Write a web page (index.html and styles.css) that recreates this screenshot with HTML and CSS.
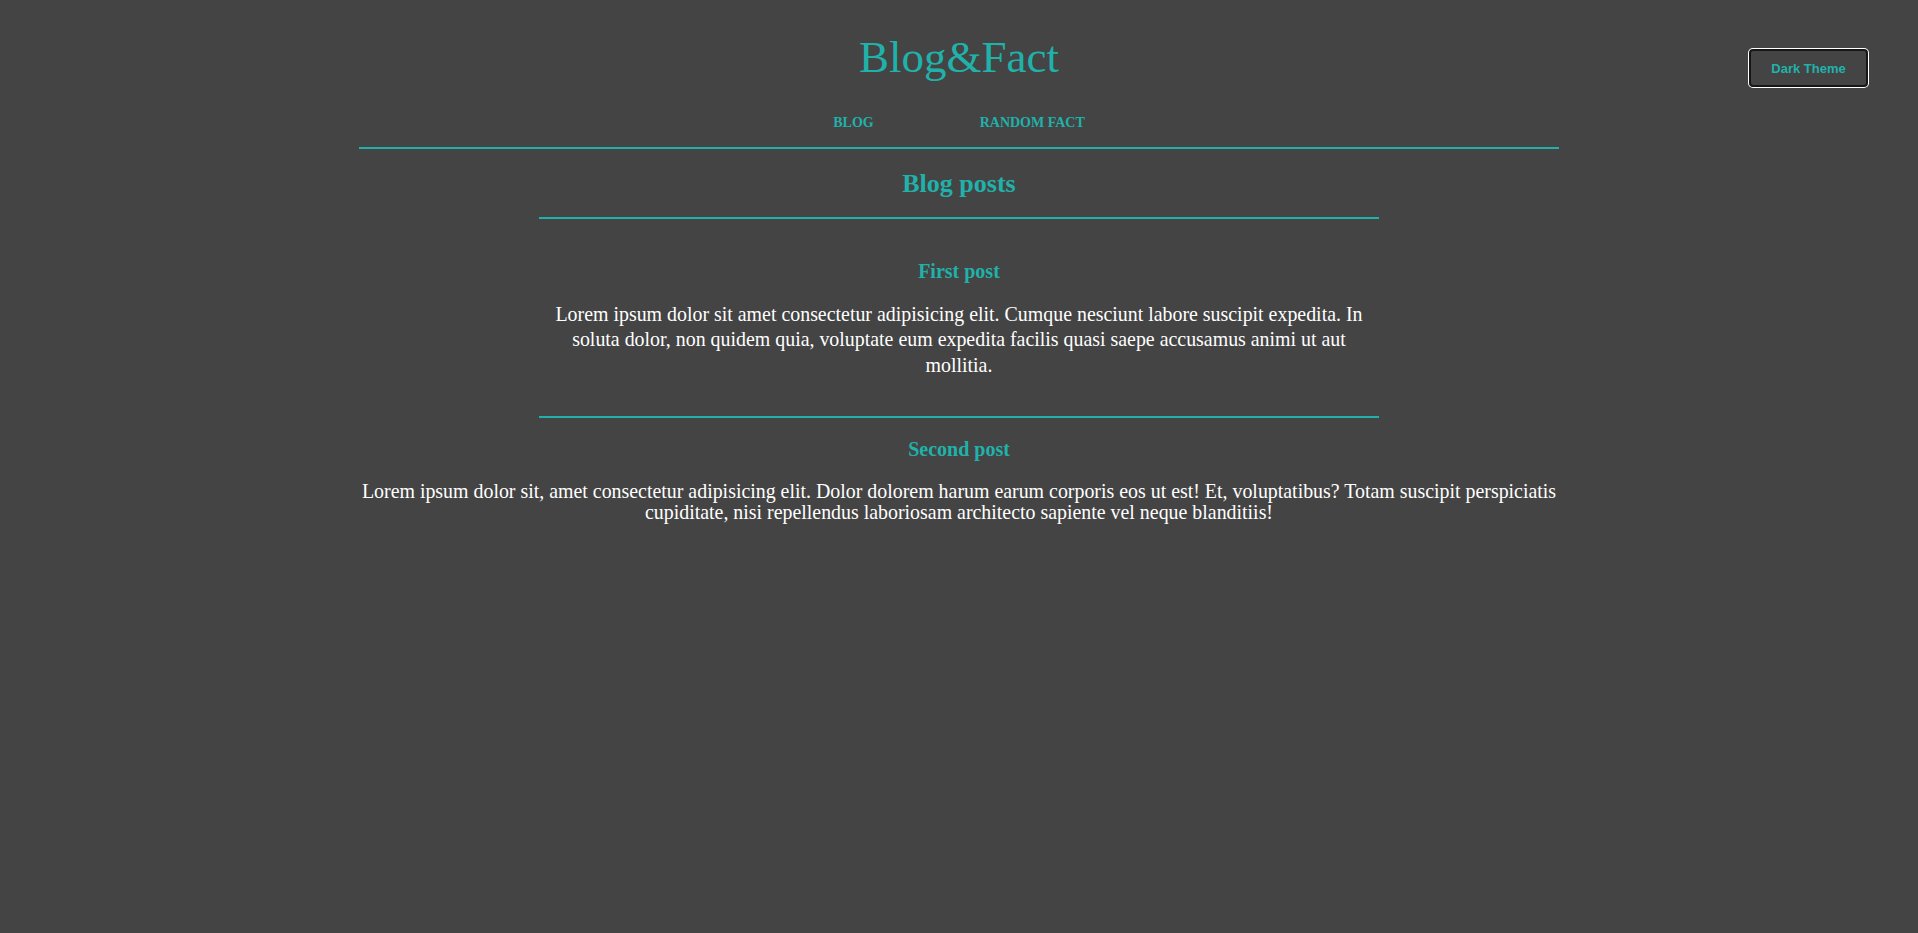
FILE: index.html
```html
<!DOCTYPE html>
<html lang="en">
<head>
<meta charset="utf-8">
<title>Blog&amp;Fact</title>
<link rel="stylesheet" href="styles.css">
</head>
<body>
<button class="theme-btn">Dark Theme</button>
<div class="page">
  <header class="site-header">
    <h1 class="logo">Blog&amp;Fact</h1>
    <nav class="nav">
      <a href="#" class="nav-link">BLOG</a>
      <a href="#" class="nav-link">RANDOM FACT</a>
    </nav>
  </header>
  <main class="content">
    <section class="posts">
      <h2 class="posts-title">Blog posts</h2>
      <article class="post post-first">
        <h3 class="post-title">First post</h3>
        <p class="post-text post-text-first">Lorem ipsum dolor sit amet consectetur adipisicing elit. Cumque nesciunt labore suscipit expedita. In soluta dolor, non quidem quia, voluptate eum expedita facilis quasi saepe accusamus animi ut aut mollitia.</p>
      </article>
    </section>
    <article class="post post-second">
      <h3 class="post-title">Second post</h3>
      <p class="post-text">Lorem ipsum dolor sit, amet consectetur adipisicing elit. Dolor dolorem harum earum corporis eos ut est! Et, voluptatibus? Totam suscipit perspiciatis cupiditate, nisi repellendus laboriosam architecto sapiente vel neque blanditiis!</p>
    </article>
  </main>
</div>
</body>
</html>
```

FILE: styles.css
```css
html, body {
  margin: 0;
  padding: 0;
}
body {
  background: #444444;
  font-family: "Liberation Serif", "Times New Roman", serif;
  color: #ffffff;
  min-height: 933px;
}
.theme-btn {
  position: absolute;
  top: 49px;
  right: 50px;
  width: 119px;
  height: 38px;
  background: #444444;
  border: 2px solid #161616;
  border-radius: 4px;
  box-shadow: 0 0 0 1px #ffffff;
  color: #20b2aa;
  font-family: "Liberation Sans", Arial, sans-serif;
  font-weight: bold;
  font-size: 13px;
  cursor: pointer;
}
.page {
  width: 1200px;
  margin: 0 auto;
}
.site-header {
  border-bottom: 2px solid #20b2aa;
  display: flex;
  flex-direction: column;
  align-items: center;
}
.logo {
  margin: 31px 0 0;
  font-size: 45px;
  font-weight: normal;
  line-height: 52px;
  color: #20b2aa;
}
.nav {
  display: flex;
  gap: 106px;
  margin-top: 32px;
  padding-bottom: 16px;
}
.nav-link {
  color: #20b2aa;
  text-decoration: none;
  font-weight: bold;
  font-size: 14px;
  line-height: 16px;
}
.content {
  display: flex;
  flex-direction: column;
  align-items: center;
}
.posts {
  width: 840px;
  display: flex;
  flex-direction: column;
  align-items: center;
}
.posts-title {
  margin: 20px 0 0;
  font-size: 26px;
  line-height: 30px;
  color: #20b2aa;
  padding-bottom: 18px;
  border-bottom: 2px solid #20b2aa;
  align-self: stretch;
  text-align: center;
}
.post {
  text-align: center;
}
.post-first {
  padding: 40px 0 38px;
  border-bottom: 2px solid #20b2aa;
  width: 100%;
}
.post-title {
  margin: 0;
  font-size: 20px;
  line-height: 24px;
  color: #20b2aa;
}
.post-text {
  margin: 20px 0 0;
  font-size: 19.9px;
  line-height: 21px;
}
.post-text-first {
  margin-top: 18.5px;
  line-height: 25.5px;
}
.post-second {
  padding-top: 19px;
}
```
